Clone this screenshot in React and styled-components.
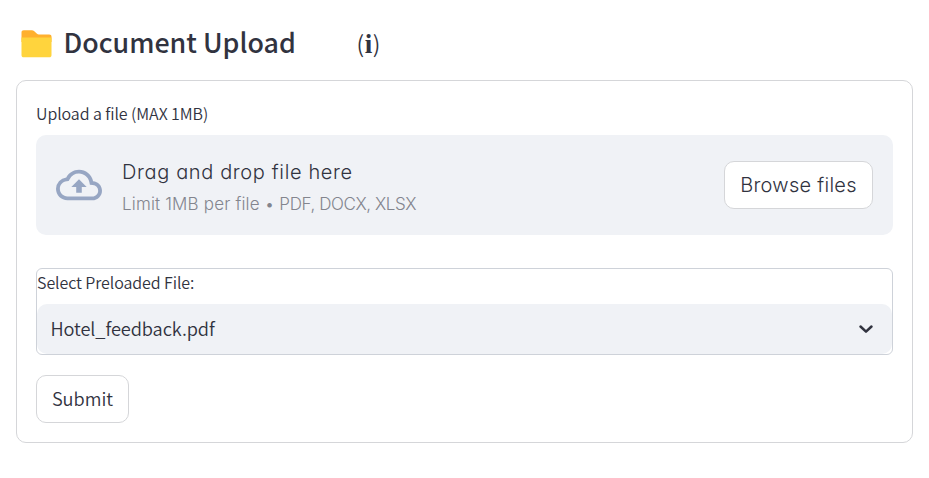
import React from "react";
import styled, { createGlobalStyle } from "styled-components";

const GlobalStyle = createGlobalStyle`
  * { box-sizing: border-box; }
  body { margin: 0; background: #fff; color: #31333f; }
  body, button { font-family: "Noto Sans CJK SC", "Open Sans", sans-serif; }
`;

const Page = styled.main`
  width: 929px;
  height: 478px;
  padding: 0 16px;
  overflow: hidden;
`;

const Header = styled.header`
  display: flex;
  align-items: center;
  height: 80px;
  padding: 4px 0 0 5px;
`;

const FolderIcon = styled.svg`
  width: 31px;
  height: 28px;
  margin-top: 3px;
  flex: none;
`;

const Title = styled.h1`
  width: 293px;
  margin: 0 0 0 11.5px;
  font-size: 26.8px;
  font-weight: 500;
  line-height: 40px;
  white-space: nowrap;
`;

const Info = styled.span`
  display: flex;
  align-items: baseline;
  margin-top: 2px;
  font-size: 23px;
  font-weight: 350;
  line-height: 30px;
  white-space: nowrap;
`;

const InfoLetter = styled.b`
  margin: 0 0.5px;
  font-family: "Liberation Serif", serif;
  font-weight: 700;
  font-size: 27px;
  line-height: 30px;
`;

const Form = styled.form`
  display: flex;
  flex-direction: column;
  align-items: flex-start;
  width: 897px;
  height: 363px;
  padding: 19px;
  border: 1px solid #d5d6d9;
  border-radius: 10px;
`;

const Label = styled.label`
  display: block;
  height: 35px;
  font-size: 16px;
  font-weight: 350;
  line-height: 27px;
  letter-spacing: -0.08px;
  white-space: nowrap;
`;

const Dropzone = styled.section`
  display: flex;
  align-items: center;
  width: 857px;
  height: 100px;
  padding: 0 20px;
  border-radius: 10px;
  background: #f0f2f6;
  font-family: Inter, sans-serif;
  font-feature-settings: "cv11";
`;

const CloudIcon = styled.svg`
  width: 46px;
  height: 46px;
  fill: #97a6c3;
`;

const Instructions = styled.div`
  flex: 1;
  margin-left: 20px;
  padding-top: 5px;
`;

const Primary = styled.div`
  font-size: 20px;
  line-height: 32px;
  font-weight: 350;
  letter-spacing: 0.64px;
`;

const Secondary = styled.div`
  color: #83858e;
  font-size: 17px;
  line-height: 32px;
  font-weight: 300;
  letter-spacing: 0.17px;
`;

const FileTypes = styled.span`
  letter-spacing: -0.4px;
`;

const Button = styled.button`
  flex: none;
  width: ${(p) => p.$width};
  height: 48px;
  padding: 0 0 2px;
  border: 1px solid #d5d6d9;
  border-radius: 10px;
  background: #fff;
  color: #31333f;
  font-size: 18.2px;
  font-weight: 350;
`;

const BrowseButton = styled(Button)`
  padding: 0;
  font-family: Inter, sans-serif;
  font-feature-settings: "cv11";
  font-size: 20px;
  letter-spacing: 0.28px;
`;

const SelectField = styled.div`
  width: 857px;
  height: 87px;
  margin: 33px 0 20px;
  border: 1px solid #ced2d9;
  border-radius: 6px;
`;

const SelectBox = styled.div`
  display: flex;
  align-items: center;
  justify-content: space-between;
  height: 50px;
  padding: 0 18px 0 13.5px;
  border-radius: 10px;
  background: #f0f2f6;
  font-size: 18.2px;
  font-weight: 350;
  line-height: 28px;
  letter-spacing: -0.08px;
`;

const SelectValue = styled.span`
  padding-bottom: 2px;
`;

const Chevron = styled.svg`
  width: 16px;
  height: 12px;
  fill: none;
  stroke: #31333f;
  stroke-width: 2.5;
  stroke-linecap: round;
  stroke-linejoin: round;
`;

export default function App() {
  return (
    <>
      <GlobalStyle />
      <Page>
        <Header>
          <FolderIcon viewBox="0 0 31 28" aria-hidden="true">
            <path fill="#ffb02e" d="M.5 2.5C.5 1 1.3.3 2.8.3h8.1c.8 0 1.5.3 2.1.8L16 3.700c.5.5 1.100.8 1.800.8h10.400c1.500 0 2.300.8 2.300 2.300V12H.5z" />
            <path fill="#ffd43d" d="M.5 7.600h30v17.400c0 1.500-.8 2.300-2.300 2.300H2.800C1.300 27.300.5 26.500.5 25z" />
          </FolderIcon>
          <Title>Document Upload</Title>
          <Info>(<InfoLetter>i</InfoLetter>)</Info>
        </Header>
        <Form onSubmit={(e) => e.preventDefault()}>
          <Label>Upload a file (MAX 1MB)</Label>
          <Dropzone>
            <CloudIcon viewBox="0 0 24 24" aria-hidden="true">
              <path d="M19.35 10.04A7.49 7.49 0 0 0 12 4C9.11 4 6.6 5.64 5.35 8.04A5.994 5.994 0 0 0 0 14c0 3.31 2.69 6 6 6h13c2.76 0 5-2.24 5-5 0-2.64-2.05-4.78-4.65-4.96zM19 18H6c-2.21 0-4-1.79-4-4 0-2.05 1.53-3.76 3.56-3.97l1.07-.11.5-.95A5.469 5.469 0 0 1 12 6c2.62 0 4.88 1.86 5.39 4.43l.3 1.5 1.53.11A2.98 2.98 0 0 1 22 15c0 1.65-1.35 3-3 3zM8 13h2.55v3h2.9v-3H16l-4-4z" />
            </CloudIcon>
            <Instructions>
              <Primary>Drag and drop file here</Primary>
              <Secondary>Limit 1MB per file • <FileTypes>PDF, DOCX, XLSX</FileTypes></Secondary>
            </Instructions>
            <BrowseButton type="button" $width="149px">Browse files</BrowseButton>
          </Dropzone>
          <SelectField>
            <Label>Select Preloaded File:</Label>
            <SelectBox>
              <SelectValue>Hotel_feedback.pdf</SelectValue>
              <Chevron viewBox="0 0 16 12" aria-hidden="true">
                <path d="M2.5 3.5 8 8.7l5.5-5.2" />
              </Chevron>
            </SelectBox>
          </SelectField>
          <Button type="submit" $width="93px">Submit</Button>
        </Form>
      </Page>
    </>
  );
}
